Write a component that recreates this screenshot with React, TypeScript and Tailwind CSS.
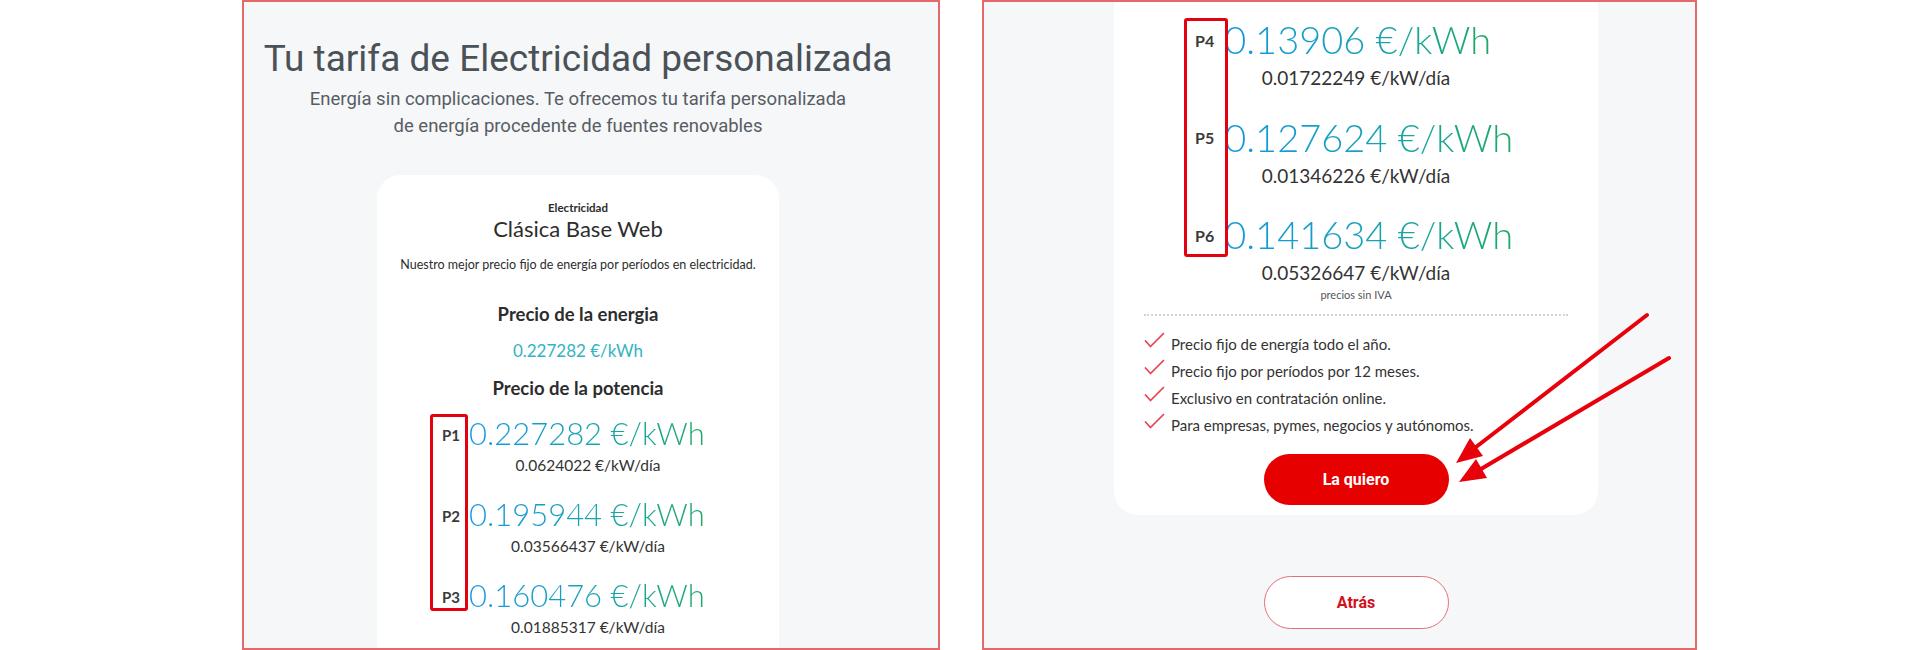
import React from "react";

type Period = { p: string; kwh: string; day: string };

const leftRows: Period[] = [
  { p: "P1", kwh: "0.227282 €/kWh", day: "0.0624022 €/kW/día" },
  { p: "P2", kwh: "0.195944 €/kWh", day: "0.03566437 €/kW/día" },
  { p: "P3", kwh: "0.160476 €/kWh", day: "0.01885317 €/kW/día" },
];

const rightRows: Period[] = [
  { p: "P4", kwh: "0.13906 €/kWh", day: "0.01722249 €/kW/día" },
  { p: "P5", kwh: "0.127624 €/kWh", day: "0.01346226 €/kW/día" },
  { p: "P6", kwh: "0.141634 €/kWh", day: "0.05326647 €/kW/día" },
];

const features = [
  "Precio fijo de energía todo el año.",
  "Precio fijo por períodos por 12 meses.",
  "Exclusivo en contratación online.",
  "Para empresas, pymes, negocios y autónomos.",
];

const priceGradient =
  "bg-linear-to-r from-[#1796e4] via-[#19a2b6] to-[#22a764] bg-clip-text text-transparent";

/**
 * Check mark used in the feature list
 */
function Check() {
  return (
    <svg width="21" height="17" viewBox="0 0 21 17" className="shrink-0 -mt-[9px]">
      <path d="M1.5 9 L6.5 14.5 L19.5 1.5" fill="none" stroke="#e8414f" strokeWidth="1.7" strokeLinecap="round" strokeLinejoin="round" />
    </svg>
  );
}

/**
 * Period rows of the left screenshot (smaller scale)
 */
function LeftPeriods() {
  return (
    <div className="w-full flex flex-col gap-[20px] mt-[14px]">
      {leftRows.map((row, i) => (
        <div key={row.p} className="flex flex-col">
          <div className="ml-[65px] flex items-center gap-[9px]">
            <span className="relative mt-[3px] text-[15px] font-bold text-[#3a3a3a] leading-[18px]">
              {row.p}
              {i === 0 && (
                <span className="absolute left-[-12px] top-[-12px] w-[38px] h-[197px] border-[3px] border-[#e3000f] rounded-[3px]" />
              )}
            </span>
            <span className={`text-[31px] leading-[36px] font-light ${priceGradient}`}>{row.kwh}</span>
          </div>
          <div className="mt-[3px] pl-[20px] text-center text-[15.5px] leading-[22px] text-[#333]">{row.day}</div>
        </div>
      ))}
    </div>
  );
}

/**
 * Period rows of the right screenshot (zoomed in)
 */
function RightPeriods() {
  return (
    <div className="flex flex-col gap-[22.5px]">
      {rightRows.map((row, i) => (
        <div key={row.p} className="flex flex-col">
          <div className="ml-[51px] flex items-center gap-[10px]">
            <span className="relative mt-[3px] text-[16px] font-bold text-[#3a3a3a] leading-[20px]">
              {row.p}
              {i === 0 && (
                <span className="absolute left-[-11px] top-[-13px] w-[44px] h-[239px] border-[3px] border-[#e3000f] rounded-[3px]" />
              )}
            </span>
            <span className={`text-[38px] leading-[44px] font-light ${priceGradient}`}>{row.kwh}</span>
          </div>
          <div className="mt-[3px] text-center text-[19px] leading-[28px] text-[#333]">{row.day}</div>
        </div>
      ))}
    </div>
  );
}

export default function App() {
  return (
    <div className="relative w-[1920px] h-[650px] bg-white overflow-hidden">
      <div className="flex gap-[42px] pl-[242px] h-full">
        {/* Left screenshot */}
        <div className="w-[698px] h-[650px] border-2 border-[#e46a6a] bg-[#f6f7f9] overflow-hidden flex flex-col items-center pt-[35px] pr-[26px]">
          <h1 className="font-[Roboto,sans-serif] text-[37px] leading-[44px] text-[#4a5157] whitespace-nowrap">
            Tu tarifa de Electricidad personalizada
          </h1>
          <p className="mt-[5px] font-[Roboto,sans-serif] text-[18.5px] leading-[27px] text-[#575d63] text-center">
            Energía sin complicaciones. Te ofrecemos tu tarifa personalizada
            <br />
            de energía procedente de fuentes renovables
          </p>

          <div className="mt-[35px] w-[402px] shrink-0 bg-white rounded-[24px] pt-[25px] pb-[40px] flex flex-col items-center font-[Lato,sans-serif] text-[#2d2d2d]">
            <div className="text-[11.5px] leading-[15px] font-bold">Electricidad</div>
            <div className="text-[22px] leading-[28px]">Clásica Base Web</div>
            <div className="mt-[14px] text-[12.5px] leading-[16px]">
              Nuestro mejor precio fijo de energía por períodos en electricidad.
            </div>
            <div className="mt-[29px] text-[18.5px] leading-[25px] font-bold">Precio de la energia</div>
            <div className="mt-[12px] text-[17px] leading-[23px] text-[#35b2c3]">0.227282 €/kWh</div>
            <div className="mt-[14px] text-[18.5px] leading-[25px] font-bold">Precio de la potencia</div>
            <LeftPeriods />
          </div>
        </div>

        {/* Right screenshot */}
        <div className="w-[715px] h-[650px] border-2 border-[#e46a6a] bg-[#f6f7f9] overflow-hidden flex flex-col items-center pl-[33px]">
          <div className="w-[484px] shrink-0 bg-white rounded-b-[24px] pt-[15px] pb-[10px] px-[30px] flex flex-col font-[Lato,sans-serif] text-[#2d2d2d]">
            <RightPeriods />
            <div className="mt-[1px] text-center text-[11px] leading-[14px] text-[#555]">precios sin IVA</div>
            <div className="mt-[12px] border-t-2 border-dotted border-[#d4d4d4]" />
            <ul className="mt-[15px] flex flex-col">
              {features.map((f) => (
                <li key={f} className="flex items-center gap-[6px] text-[15px] leading-[27px] text-[#333]">
                  <Check />
                  {f}
                </li>
              ))}
            </ul>
            <button className="mt-[15px] self-center w-[185px] h-[51px] rounded-full bg-[#e60000] text-white font-[Roboto,sans-serif] font-bold text-[16px]">
              La quiero
            </button>
          </div>
          <button className="mt-[61px] w-[185px] h-[53px] rounded-full bg-white border border-[#e07078] text-[#d3101c] font-[Roboto,sans-serif] font-bold text-[16px]">
            Atrás
          </button>
        </div>
      </div>

      {/* Annotation arrows */}
      <svg className="absolute inset-0 pointer-events-none" width="1920" height="650" viewBox="0 0 1920 650">
        <g stroke="#e8000b" strokeWidth="4" strokeLinecap="round">
          <line x1="1647" y1="315" x2="1476" y2="447" />
          <line x1="1669" y1="358" x2="1481" y2="469" />
        </g>
        <g fill="#e8000b">
          <polygon points="1456,463 1483,456 1470,438" />
          <polygon points="1459,482 1487,478 1476,459" />
        </g>
      </svg>
    </div>
  );
}
